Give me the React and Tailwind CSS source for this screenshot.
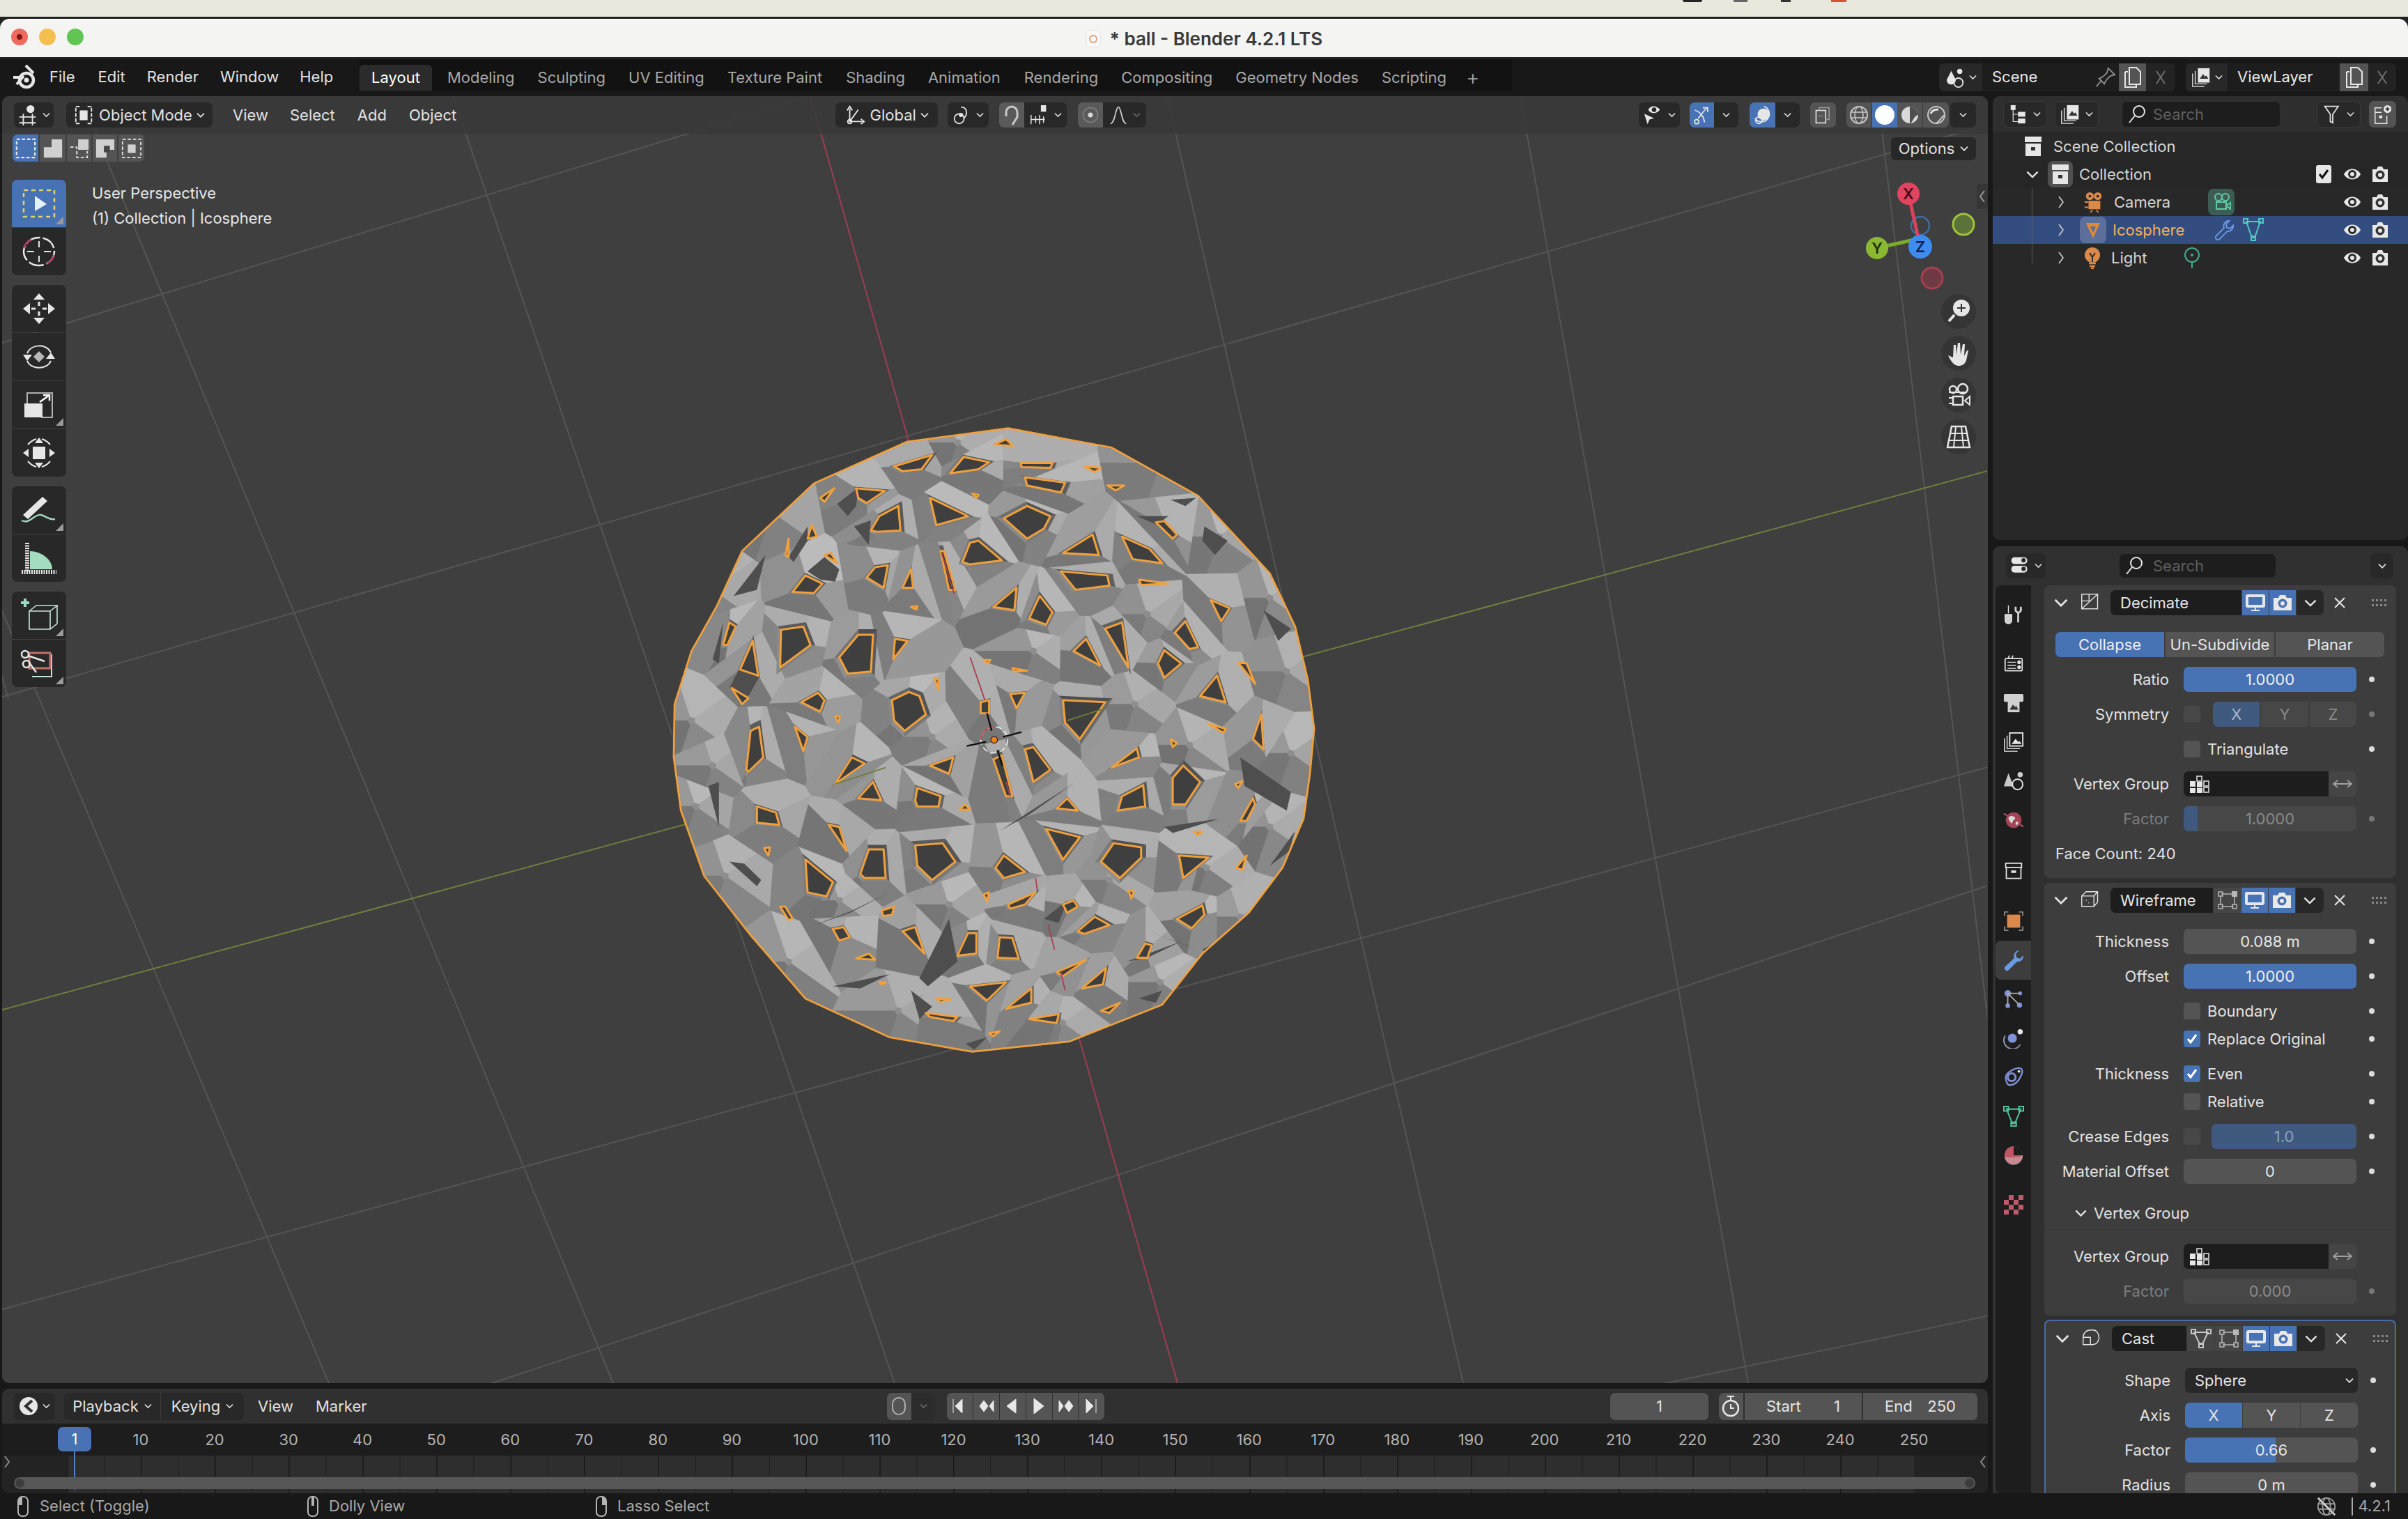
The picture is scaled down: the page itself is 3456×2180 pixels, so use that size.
import React, { useMemo } from 'react';

// ---------- the ball: orange-outlined openings traced from the picture (coords in a 1568 box) ----------
const HOLES = [
  [550,118,640,90,615,125,570,130],[683,135,715,95,775,108,750,125],[787,65,815,52,832,68],[850,110,925,110,920,122,852,120],
  [860,145,955,158,945,182,865,165],[1000,118,1040,122,1025,132],[1055,165,1095,165,1075,177],[460,172,528,178,485,208,465,195],
  [375,195,408,172,385,205],[495,275,515,240,560,215,565,275,510,278],[635,195,725,240,650,262],[810,245,865,215,920,240,905,270,865,295],
  [735,185,750,188,745,195],[1170,255,1190,252,1220,285,1210,295],[345,295,355,262,367,290],[293,335,300,295,300,340],
  [712,352,730,305,750,300,805,348,730,358],[660,325,668,325,695,420,680,420],[950,330,1020,285,1035,335],[1090,290,1155,320,1185,355,1115,345],
  [945,375,1055,385,1060,410,980,420],[1130,395,1200,405,1135,408],[385,335,400,330,415,355],[310,425,340,385,380,405,360,428],
  [485,390,505,365,535,360,525,415],[570,415,590,370,595,415],[590,462,605,460,603,468],[785,462,840,415,835,470],
  [870,490,895,435,925,475,910,505],[1300,445,1345,465,1325,497],[145,555,160,500,175,510,155,555],[280,610,282,518,335,510,352,555],
  [420,585,465,530,500,530,495,620,440,625],[548,590,552,540,582,545],[185,615,215,545,228,630],[975,570,1005,540,1038,605],
  [1050,515,1090,500,1105,610],[1215,525,1240,497,1270,560,1250,565],[1175,600,1190,568,1230,600,1190,635],[1365,598,1385,600,1405,650],
  [1275,680,1315,630,1335,695],[825,675,860,672,840,710],[762,592,778,592,772,600],[830,612,865,618,835,620],[645,635,655,640,655,665],
  [545,690,585,670,610,680,625,725,575,765,550,740],[330,695,370,672,385,690,375,718],[165,660,205,685,190,700],[950,690,1050,695,990,785,955,745],
  [755,695,775,690,775,722,755,722],[410,730,422,730,418,745],[315,755,345,780,335,815],[200,860,210,765,230,755,240,830,205,865],
  [1400,785,1420,725,1425,810],[1295,748,1335,760,1330,770],[1205,785,1220,795,1210,805],[860,810,880,805,920,860,880,890],
  [785,835,805,825,830,925,815,925],[410,895,450,830,480,845],[635,850,690,830,680,870],[1065,855,1125,808,1130,830],
  [1210,880,1235,850,1275,890,1240,945,1210,945],[465,930,500,890,520,935],[600,935,605,905,660,925,655,950,605,950],[705,958,730,958,718,945],
  [935,955,960,930,985,960],[1080,960,1090,925,1140,898,1145,950],[1358,895,1375,888,1365,905],[1370,985,1400,930,1405,945,1385,985],
  [225,950,270,965,278,995,225,990],[395,995,420,1000,438,1060],[910,1005,990,1025,950,1080],[1040,1085,1070,1040,1135,1050,1135,1075,1085,1125],
  [1225,1070,1295,1075,1235,1125],[600,1045,665,1040,695,1085,640,1130,605,1095],[470,1115,490,1055,525,1055,530,1125,480,1125],
  [242,1052,256,1050,252,1070],[340,1080,405,1135,390,1170,345,1160],[790,1100,810,1070,860,1110,810,1125],[1260,1012,1280,1012,1270,1020],
  [1360,1100,1385,1070,1375,1105],[820,1190,885,1160,860,1190,825,1200],[762,1165,775,1160,770,1182],[950,1190,975,1180,985,1195,960,1210],
  [985,1255,1025,1220,1060,1240,1000,1262],[1105,1155,1118,1158,1112,1175],[1220,1225,1280,1192,1285,1215,1255,1248],[520,1205,550,1195,545,1215,525,1218],
  [405,1250,430,1245,445,1270,420,1278],[570,1255,600,1245,622,1310],[700,1315,725,1260,745,1260,745,1310],[795,1320,800,1270,830,1272,845,1322],
  [1125,1320,1145,1285,1160,1290,1150,1320],[935,1355,1005,1325,950,1365],[995,1395,1052,1345,1045,1385],[460,1322,490,1310,505,1325],
  [280,1195,292,1195,310,1225,300,1228],[730,1390,815,1380,770,1425],[815,1445,875,1395,875,1430],[650,1420,685,1422,660,1428],
  [625,1455,700,1465,690,1475,635,1465],[870,1470,940,1458,935,1480],[1040,1450,1085,1430,1060,1455],[775,1505,800,1500,785,1512],[515,1380,530,1380,522,1386],
];

// extra ridge centres so the rim breaks into facets too
const RIM = [
  [700,60],[1180,110],[1320,290],[1440,440],[1480,620],[1490,820],[1440,1000],[1370,1220],[1180,1380],[950,1480],[560,1450],[300,1330],
  [150,1120],[80,950],[70,740],[120,420],[260,230],[1250,800],[1120,700],[880,570],[640,780],[120,850],[1290,1100],[1060,1130],[680,1190],[420,1180],[1150,480],
];

const SHARDS = [
  [300,340,345,265,345,300,312,352],[415,210,465,170,460,215,440,240],[345,375,385,340,420,370,410,400,375,395],[170,435,245,335,225,420],
  [120,590,145,500,135,600],[160,660,190,600,230,635,205,680],[1285,265,1340,300,1310,335,1280,300],[1425,470,1490,515,1460,545],
  [1370,830,1490,915,1480,960,1380,900],[1150,1255,1280,1305,1230,1285],[350,1245,445,1210,540,1160,450,1205],[630,1390,700,1330,680,1225,610,1370],
  [800,1010,980,890,870,970],[1190,1000,1320,980,1210,1015],[110,900,135,890,135,1000],[1280,1300,1340,1270,1300,1315],[720,1530,770,1515,740,1545],
  [1130,1420,1185,1400,1170,1430],[1205,200,1265,195,1240,215],[455,265,495,250,490,310],[1125,240,1200,240,1170,260],[160,1085,195,1090,235,1130,225,1145],
  [940,1235,960,1180,905,1225],[1440,1095,1500,1010,1485,1060],[1100,1330,1230,1280,1150,1320],[405,1390,540,1360,470,1395],[590,1400,640,1440,610,1470],
];

const OUTLINE = '820,25 1065,72 1270,190 1440,380 1500,510 1530,640 1545,760 1535,870 1520,980 1470,1100 1390,1210 1280,1310 1185,1435 965,1525 735,1550 540,1515 340,1420 210,1265 100,1120 45,960 28,830 30,700 70,570 130,460 190,325 360,160 580,58';

const toPts = (a) => { const r = []; for (let i = 0; i < a.length; i += 2) r.push([a[i], a[i + 1]]); return r; };
const centre = (p) => [p.reduce((s, q) => s + q[0], 0) / p.length, p.reduce((s, q) => s + q[1], 0) / p.length];
const ptStr = (p) => p.map((q) => `${q[0].toFixed(1)},${q[1].toFixed(1)}`).join(' ');
const area = (p) => Math.abs(p.reduce((s, q, i) => { const n = p[(i + 1) % p.length]; return s + q[0] * n[1] - n[0] * q[1]; }, 0)) / 2;

function clipCell(poly, a, b) {
  const f = (p) => (p[0] - a[0]) ** 2 + (p[1] - a[1]) ** 2 - (p[0] - b[0]) ** 2 - (p[1] - b[1]) ** 2;
  const out = [];
  poly.forEach((p, i) => {
    const q = poly[(i + 1) % poly.length];
    const fp = f(p), fq = f(q);
    if (fp <= 0) out.push(p);
    if (fp * fq < 0) { const t = fp / (fp - fq); out.push([p[0] + (q[0] - p[0]) * t, p[1] + (q[1] - p[1]) * t]); }
  });
  return out;
}

function rayHit(c, ang, cell) {
  const dx = Math.cos(ang), dy = Math.sin(ang);
  let best = null, bestT = Infinity;
  cell.forEach((p, i) => {
    const q = cell[(i + 1) % cell.length];
    const ex = q[0] - p[0], ey = q[1] - p[1];
    const d = dx * ey - dy * ex;
    if (Math.abs(d) < 1e-9) return;
    const t = ((p[0] - c[0]) * ey - (p[1] - c[1]) * ex) / d;
    const u = ((p[0] - c[0]) * dy - (p[1] - c[1]) * dx) / d;
    if (t > 0 && u >= -1e-6 && u <= 1 + 1e-6 && t < bestT) { bestT = t; best = [c[0] + dx * t, c[1] + dy * t]; }
  });
  return best || c;
}

function buildBall() {
  const holes = HOLES.map((a) => {
    const pts = toPts(a);
    const c = centre(pts);
    return { c, pts: pts.sort((p, q) => Math.atan2(p[1] - c[1], p[0] - c[0]) - Math.atan2(q[1] - c[1], q[0] - c[0])), real: true };
  });
  const seeds = holes.filter((h) => area(h.pts) > 500);
  RIM.forEach(([x, y]) => {
    const pts = [0, 1, 2, 3, 4].map((k) => [x + 10 * Math.cos(k * 1.257 - 3.1416 + 0.3 * (x % 5)), y + 10 * Math.sin(k * 1.257 - 3.1416 + 0.3 * (x % 5))]);
    seeds.push({ c: [x, y], pts, real: false });
  });
  const faces = [];
  const walls = [];
  seeds.forEach((h, si) => {
    let cell = [[-60, -60], [1630, -60], [1630, 1630], [-60, 1630]];
    seeds.forEach((o, oi) => { if (oi !== si) cell = clipCell(cell, h.c, o.c); });
    h.pts.forEach((a, i) => {
      const b = h.pts[(i + 1) % h.pts.length];
      const a1 = Math.atan2(a[1] - h.c[1], a[0] - h.c[0]);
      let a2 = Math.atan2(b[1] - h.c[1], b[0] - h.c[0]);
      if (a2 <= a1) a2 += Math.PI * 2;
      const between = cell
        .map((p) => { let t = Math.atan2(p[1] - h.c[1], p[0] - h.c[0]); while (t < a1) t += Math.PI * 2; return { p, t }; })
        .filter((o) => o.t < a2)
        .sort((m, n) => m.t - n.t)
        .map((o) => o.p);
      const mid = (a1 + a2) / 2;
      const lit = Math.cos(mid) * 0.6 - Math.sin(mid) * 0.8;
      const jitter = ((si * 7 + i * 13) % 11) - 5;
      const g = Math.round(150 + 32 * lit + jitter);
      faces.push({ pts: [a, rayHit(h.c, a1, cell), ...between, rayHit(h.c, a2, cell), b], g });
      if (h.real) {
        const grow = (p) => [h.c[0] + (p[0] - h.c[0]) * 1.28, h.c[1] + (p[1] - h.c[1]) * 1.28];
        const w = Math.round(112 - 30 * lit + jitter);
        walls.push({ pts: [a, grow(a), grow(b), b], g: w });
      }
    });
  });
  return { holes, faces, walls };
}

function Ball() {
  const { holes, faces, walls } = useMemo(buildBall, []);
  return (
    <g transform="translate(950 600) scale(0.6059 0.5867)">
      <clipPath id="ball-clip"><polygon points={OUTLINE} /></clipPath>
      <polygon points={OUTLINE} fill="#8e8e8e" />
      <g clipPath="url(#ball-clip)">
        {faces.map((f, i) => <polygon key={i} points={ptStr(f.pts)} fill={`rgb(${f.g},${f.g},${f.g})`} stroke={`rgb(${f.g},${f.g},${f.g})`} strokeWidth="0.8" />)}
        {walls.map((f, i) => <polygon key={i} points={ptStr(f.pts)} fill={`rgb(${f.g},${f.g},${f.g})`} />)}
        {SHARDS.map((s, i) => <polygon key={i} points={ptStr(toPts(s))} fill="#4e4e4e" />)}
      </g>
      {holes.map((h, i) => <polygon key={i} points={ptStr(h.pts)} fill="#3f3f3f" stroke="#f0a03c" strokeWidth="5" strokeLinejoin="round" />)}
      <g fill="none" strokeWidth="3">
        <path d="M662 328L692 430M730 585L765 690M885 1125L890 1160M915 1240L930 1300M945 1355L955 1400M815 890L825 925" stroke="#a8404f" />
        <path d="M960 740L1050 710M410 895L530 855" stroke="#6d7d3c" />
      </g>
      <polygon points={OUTLINE} fill="none" stroke="#f0a03c" strokeWidth="4.5" />
      <g fill="none">
        <circle cx="787" cy="787" r="32" stroke="#e8e8e8" strokeWidth="3" strokeDasharray="14 8" />
        <path d="M787 787m-32 0a32 32 0 0 1 32-32" stroke="#c05050" strokeWidth="3" />
        <path d="M722 802L768 792M808 780L852 768M770 722L781 765M795 812L806 850" stroke="#101010" strokeWidth="4" />
        <circle cx="787" cy="787" r="8" fill="#f0801c" stroke="#222" strokeWidth="2" />
      </g>
    </g>
  );
}

// ---------- viewport floor grid ----------
const GRID = [
  [0,493,1177,134],[0,1001,2856,178],[0,1880,2856,1100],[0,2220,2856,1270],[1600,2150,2856,1888],
  [115,138,880,1985],[650,138,1284,1985],[1675,138,2100,1985],[2182,138,2509,1985],[2695,138,2915,1985],[0,870,472,1985],[0,960,12,1003],
];

// ---------- little icon helpers ----------
const Ico = ({ w = 32, h = 32, vb = '0 0 32 32', children, className = '' }) => (
  <svg width={w} height={h} viewBox={vb} fill="none" stroke="#e6e6e6" strokeWidth="2" className={`shrink-0 ${className}`}>{children}</svg>
);
const Chev = ({ dim, size = 14 }) => (
  <svg width={size} height={size * 0.7} viewBox="0 0 14 10" fill="none" stroke={dim ? '#6a6a6a' : '#e0e0e0'} strokeWidth="2" className="shrink-0"><path d="M1 2l6 6 6-6" /></svg>
);
const GlassIcon = () => (
  <Ico w={26} h={28} vb="0 0 26 28" ><circle cx="16" cy="10" r="8" /><path d="M10 16L2 26" /></Ico>
);
const Eye = () => (
  <Ico w={26} h={24} vb="0 0 26 24"><path d="M1 12C6 2 20 2 25 12C20 22 6 22 1 12Z" fill="#e8e8e8" stroke="none" /><circle cx="13" cy="12" r="6" fill="#2a2a2a" stroke="none" /><circle cx="13" cy="12" r="3" fill="#e8e8e8" stroke="none" /></Ico>
);
const CamRender = ({ fill = '#e8e8e8', lens = '#2a2a2a' }) => (
  <Ico w={26} h={26} vb="0 0 26 26"><path d="M2 6h6l2-4h6l2 4h6v18H2Z" fill={fill} stroke="none" /><circle cx="13" cy="14" r="6.5" fill={lens} stroke="none" /><circle cx="13" cy="14" r="3" fill={fill} stroke="none" /></Ico>
);
const Monitor = () => (
  <Ico w={30} h={26} vb="0 0 30 26"><rect x="2" y="2" width="26" height="17" rx="2" fill="#dfe6f2" stroke="#e8e8e8" /><rect x="5" y="5" width="20" height="11" fill="#4772b3" stroke="none" /><path d="M9 24h12M15 19v5" /></Ico>
);
const CamBlue = () => (
  <Ico w={30} h={26} vb="0 0 30 26"><path d="M2 6h7l2-4h8l2 4h7v18H2Z" fill="#e8e8e8" stroke="none" /><circle cx="15" cy="14" r="6.5" fill="#4772b3" stroke="none" /><circle cx="15" cy="14" r="3" fill="#e8e8e8" stroke="none" /></Ico>
);
const Cage = () => (
  <Ico w={30} h={28} vb="0 0 30 28" className="opacity-70"><path d="M6 5H24M6 23H24M5 7V21M25 7V21" strokeWidth="1.5" /><rect x="2" y="2" width="6" height="6" strokeWidth="1.5" /><rect x="21" y="1" width="8" height="8" fill="#e8e8e8" stroke="none" /><rect x="2" y="20" width="6" height="6" strokeWidth="1.5" /><rect x="22" y="20" width="6" height="6" strokeWidth="1.5" /></Ico>
);
const TriMesh = ({ c = '#e6e6e6', op = 'opacity-80' }) => (
  <Ico w={30} h={28} vb="0 0 30 28" className={op}><path d="M5 5H25L17 22H13Z" stroke={c} /><rect x="1" y="1" width="6" height="6" stroke={c} /><rect x="23" y="1" width="6" height="6" stroke={c} /><rect x="12" y="21" width="6" height="6" stroke={c} /></Ico>
);
const GroupIcon = () => (
  <Ico w={32} h={28} vb="0 0 32 28" className="ml-[8px]" >
    <rect x="1" y="10" width="8" height="8" fill="#e6e6e6" stroke="none" /><rect x="11" y="3" width="7" height="7" strokeWidth="1.5" /><rect x="11" y="11" width="8" height="8" fill="#e6e6e6" stroke="none" /><rect x="21" y="10" width="7" height="7" strokeWidth="1.5" /><rect x="1" y="20" width="8" height="7" fill="#e6e6e6" stroke="none" /><rect x="11" y="20" width="8" height="7" fill="#e6e6e6" stroke="none" /><rect x="21" y="19" width="7" height="7" strokeWidth="1.5" />
  </Ico>
);
const CornerMark = () => (
  <span className="absolute bottom-[4px] right-[4px] w-0 h-0 border-l-[11px] border-l-transparent border-b-[11px] border-b-[#9a9a9a]" />
);
const Mouse = ({ part }) => (
  <svg width="18" height="32" viewBox="0 0 18 32" fill="none" stroke="#b4b4b4" strokeWidth="2" className="shrink-0">
    <rect x="2" y="2" width="14" height="28" rx="6" />
    {part === 'left' && <path d="M3 3h5v11H3Z" fill="#b4b4b4" stroke="none" />}
    {part === 'mid' && <rect x="7" y="3" width="4" height="12" fill="#b4b4b4" stroke="none" />}
    {part === 'right' && <path d="M10 3h5v11h-5Z" fill="#b4b4b4" stroke="none" />}
  </svg>
);

// ---------- header pieces ----------
const DarkBtn = ({ className = '', children }) => (
  <div className={`h-[36px] bg-[#282828] rounded-[7px] flex items-center justify-center gap-[6px] shrink-0 ${className}`}>{children}</div>
);
const Menu = ({ children, className = '' }) => <span className={`text-[22px] text-[#e2e2e2] ${className}`}>{children}</span>;

function ViewportHeader() {
  return (
    <div className="relative h-[54px] flex items-center pl-[17px] pr-[17px] bg-[#383838]/85">
      <DarkBtn className="w-[57px]">
        <Ico w={30} h={32}><circle cx="20" cy="7" r="6" fill="#e6e6e6" stroke="none" /><path d="M3 19H28M3 28H28M9 14V32M23 14V32" /></Ico><Chev size={11} />
      </DarkBtn>
      <DarkBtn className="w-[210px] ml-[18px]">
        <Ico w={30} h={34}><path d="M9 3H3V29H9M21 3H27V29H21" strokeDasharray="6 2" /><rect x="9" y="9" width="12" height="15" fill="#e6e6e6" stroke="none" /></Ico>
        <span className="text-[22px] text-[#e2e2e2]">Object Mode</span><Chev size={12} />
      </DarkBtn>
      <Menu className="ml-[29px]">View</Menu>
      <Menu className="ml-[31px]">Select</Menu>
      <Menu className="ml-[32px]">Add</Menu>
      <Menu className="ml-[32px]">Object</Menu>

      <DarkBtn className="w-[147px] ml-[544px]">
        <Ico w={30} h={32}><path d="M7 6V26H27M7 26L20 8" /><path d="M3 9L7 3l4 6M24 22l5 4-5 4" /><circle cx="7" cy="26" r="3" /></Ico>
        <span className="text-[22px] text-[#e2e2e2]">Global</span><Chev size={12} />
      </DarkBtn>
      <DarkBtn className="w-[59px] ml-[14px]">
        <Ico w={28} h={32}><circle cx="11" cy="22" r="8" /><path d="M14 3C24 3 26 15 18 22" /><circle cx="14" cy="16" r="2.5" fill="#e6e6e6" /></Ico><Chev size={11} />
      </DarkBtn>
      <div className="ml-[15px] w-[36px] h-[36px] bg-[#5a5a5a] rounded-l-[7px] flex items-center justify-center">
        <Ico w={26} h={32} vb="0 0 26 32"><path d="M5 18V12a8 8 0 0 1 16 0v7L14 30" stroke="#c8c8c8" strokeWidth="3" /></Ico>
      </div>
      <DarkBtn className="w-[61px] rounded-l-none">
        <Ico w={30} h={32}><rect x="18" y="1" width="8" height="10" fill="#e6e6e6" stroke="none" /><path d="M3 16V30M10 18V28M16 16V30M22 18V28M3 23H24" strokeWidth="1.6" /></Ico><Chev size={11} />
      </DarkBtn>
      <div className="ml-[16px] w-[36px] h-[36px] bg-[#5a5a5a] rounded-l-[7px] flex items-center justify-center">
        <Ico w={28} h={28}><circle cx="16" cy="16" r="12" stroke="#7c7c7c" /><circle cx="16" cy="16" r="4" fill="#d8d8d8" stroke="none" /></Ico>
      </div>
      <DarkBtn className="w-[62px] rounded-l-none">
        <Ico w={28} h={32}><path d="M2 30C10 30 10 3 15 3C20 3 20 30 28 30" stroke="#cfcfcf" /></Ico><Chev dim size={11} />
      </DarkBtn>

      <div className="ml-auto flex items-center">
        <DarkBtn className="w-[59px]">
          <Ico w={30} h={32}><path d="M2 14L7 30l3-7 7-2Z" fill="#e6e6e6" stroke="none" /><path d="M8 8C12 1 20 1 26 8C20 15 12 15 8 8Z" fill="#e6e6e6" stroke="none" /><circle cx="17" cy="8" r="3.5" fill="#282828" stroke="none" /></Ico><Chev size={11} />
        </DarkBtn>
        <div className="ml-[14px] w-[35px] h-[36px] bg-[#4772b3] rounded-l-[7px] flex items-center justify-center">
          <Ico w={28} h={32}><circle cx="7" cy="27" r="3.5" /><path d="M4 8C14 12 18 18 20 28M9 22C14 16 18 10 24 4" /><path d="M17 4H25V11" /></Ico>
        </div>
        <DarkBtn className="w-[35px] rounded-l-none"><Chev size={11} /></DarkBtn>
        <div className="ml-[16px] w-[37px] h-[36px] bg-[#4772b3] rounded-l-[7px] flex items-center justify-center">
          <Ico w={30} h={34}><path d="M18 3a12 12 0 1 1-14 18" /><circle cx="17" cy="15" r="9" fill="#e6e6e6" stroke="none" /><circle cx="10" cy="24" r="5" /></Ico>
        </div>
        <DarkBtn className="w-[35px] rounded-l-none"><Chev size={11} /></DarkBtn>
        <div className="ml-[15px] w-[37px] h-[36px] bg-[#545454] rounded-[7px] flex items-center justify-center">
          <Ico w={26} h={32}><rect x="3" y="8" width="17" height="22" /><path d="M9 8V3H26V24H20" stroke="#9a9a9a" /><path d="M9 18h1M13 18h1" /></Ico>
        </div>
        <div className="ml-[15px] flex h-[36px] rounded-[7px] overflow-hidden">
          <div className="w-[37px] bg-[#545454] flex items-center justify-center border-r border-[#3a3a3a]">
            <Ico w={28} h={28} vb="0 0 28 28"><circle cx="14" cy="14" r="12" stroke="#c8c8c8" /><ellipse cx="14" cy="14" rx="6" ry="12" stroke="#c8c8c8" strokeWidth="1.5" /><path d="M2 10H26M2 18H26" stroke="#c8c8c8" strokeWidth="1.5" /></Ico>
          </div>
          <div className="w-[36px] bg-[#4772b3] flex items-center justify-center"><div className="w-[28px] h-[28px] rounded-full bg-white" /></div>
          <div className="w-[37px] bg-[#545454] flex items-center justify-center border-r border-[#3a3a3a]">
            <Ico w={28} h={28} vb="0 0 28 28"><circle cx="14" cy="14" r="12" fill="#d8d8d8" stroke="none" /><path d="M14 2A12 12 0 0 1 26 14C20 14 18 26 14 26Z" fill="#505050" stroke="none" /></Ico>
          </div>
          <div className="w-[37px] bg-[#545454] flex items-center justify-center">
            <Ico w={28} h={28} vb="0 0 28 28"><circle cx="14" cy="14" r="12" stroke="#c8c8c8" /><path d="M6 12C8 7 13 6 17 6" stroke="#e6e6e6" strokeWidth="3" /><path d="M26 14C22 16 20 22 14 26" stroke="#c8c8c8" /></Ico>
          </div>
        </div>
        <DarkBtn className="w-[37px] ml-[2px]"><Chev size={11} /></DarkBtn>
      </div>
    </div>
  );
}

function SelectModes() {
  const dash = { strokeDasharray: '5 3' };
  return (
    <div className="absolute left-[15px] top-[55px] flex h-[39px] rounded-[7px] overflow-hidden gap-[2px]">
      <div className="w-[37px] bg-[#4772b3] flex items-center justify-center"><Ico w={30} h={32}><rect x="2" y="2" width="28" height="28" strokeWidth="2.5" {...dash} /></Ico></div>
      <div className="w-[37px] bg-[#545454] flex items-center justify-center"><Ico w={30} h={32}><path d="M14 2H30V30H2V14H14Z" fill="#d0d0d0" stroke="none" /></Ico></div>
      <div className="w-[35px] bg-[#545454] flex items-center justify-center"><Ico w={30} h={32}><path d="M14 2H30V18H14Z" fill="#d0d0d0" stroke="none" /><path d="M2 14H12V30H28V20" {...dash} /></Ico></div>
      <div className="w-[35px] bg-[#545454] flex items-center justify-center"><Ico w={30} h={32}><path d="M2 2H30V18H18V30H2Z" fill="#d0d0d0" stroke="none" /><rect x="14" y="12" width="9" height="10" fill="#454545" stroke="none" /></Ico></div>
      <div className="w-[37px] bg-[#545454] flex items-center justify-center"><Ico w={30} h={32}><rect x="2" y="2" width="28" height="28" {...dash} /><rect x="10" y="10" width="12" height="13" fill="#d0d0d0" stroke="none" /></Ico></div>
    </div>
  );
}

function Tool({ active, mark, children, className = '' }) {
  return (
    <div className={`relative w-[78px] h-[68px] flex items-center justify-center ${active ? 'bg-[#4772b3]' : 'bg-[#282828]'} ${className}`}>
      {children}
      {mark && <CornerMark />}
    </div>
  );
}

function Toolbar() {
  return (
    <div className="absolute left-[14px] top-[120px] flex flex-col w-[78px]">
      <div className="flex flex-col gap-[1px] rounded-[8px] overflow-hidden">
        <Tool active mark>
          <Ico w={50} h={46} vb="0 0 50 46"><rect x="3" y="4" width="44" height="38" stroke="#e4d36a" strokeWidth="2.5" strokeDasharray="6 5" /><path d="M19 12L36 24L19 34Z" fill="#e8eef8" stroke="none" /></Ico>
        </Tool>
        <Tool>
          <Ico w={50} h={46} vb="0 0 50 46"><ellipse cx="25" cy="23" rx="22" ry="20" stroke="#e8e8e8" strokeWidth="2.5" strokeDasharray="22 4" /><path d="M3 18A22 20 0 0 1 14 6M47 28A22 20 0 0 1 36 40" stroke="#b04060" strokeWidth="2.5" /><path d="M25 8V17M25 29V38M8 23H18M32 23H42" /></Ico>
        </Tool>
      </div>
      <div className="flex flex-col gap-[1px] rounded-[8px] overflow-hidden mt-[14px]">
        <Tool>
          <Ico w={50} h={48} vb="0 0 50 48"><path d="M25 2l8 9H17ZM25 46l8-9H17ZM2 24l10-8v16ZM48 24l-10-8v16Z" fill="#e6e6e6" stroke="none" /><path d="M25 14v6M25 28v6M14 24h6M30 24h6" strokeWidth="3" /></Ico>
        </Tool>
        <Tool>
          <Ico w={50} h={44} vb="0 0 50 44"><path d="M25 14l8 8-8 8-8-8Z" fill="#b8b8b8" stroke="none" /><path d="M8 17C14 3 36 3 42 16M42 28C36 41 14 41 8 28" /><path d="M2 19h13l-7 9ZM48 25H35l7-9Z" fill="#e6e6e6" stroke="none" /></Ico>
        </Tool>
        <Tool mark>
          <Ico w={50} h={44} vb="0 0 50 44"><path d="M8 20V5H44V40H28" stroke="#b0b0b0" /><rect x="4" y="20" width="26" height="20" fill="#e6e6e6" stroke="none" /><path d="M26 18L40 8M31 8H40V16" stroke="#ffffff" strokeWidth="2.5" /></Ico>
        </Tool>
        <Tool>
          <Ico w={50} h={48} vb="0 0 50 48"><rect x="16" y="15" width="18" height="18" fill="#e6e6e6" stroke="none" /><path d="M25 2l6 8H19ZM25 46l6-8H19ZM2 24l8-6v12ZM48 24l-8-6v12Z" fill="#e6e6e6" stroke="none" /><path d="M9 12C14 6 18 5 21 4M41 12C36 6 32 5 29 4M9 36C14 42 18 43 21 44M41 36C36 42 32 43 29 44" /></Ico>
        </Tool>
      </div>
      <div className="flex flex-col gap-[1px] rounded-[8px] overflow-hidden mt-[14px]">
        <Tool mark>
          <Ico w={54} h={46} vb="0 0 54 46"><path d="M4 30L32 4l7 6L11 36Z" fill="#e6e6e6" stroke="none" /><path d="M2 38C14 44 20 28 30 30C38 32 42 38 50 36" stroke="#9fd8c0" strokeWidth="2.5" /></Ico>
        </Tool>
        <Tool>
          <Ico w={54} h={48} vb="0 0 54 48"><path d="M14 40V14C30 14 46 26 46 40Z" fill="#a4dcc0" stroke="none" /><path d="M2 44H52M10 2V44" stroke="#e6e6e6" strokeWidth="6" strokeDasharray="2 1.5" /></Ico>
        </Tool>
      </div>
      <div className="flex flex-col gap-[1px] rounded-[8px] overflow-hidden mt-[14px]">
        <Tool mark>
          <Ico w={56} h={48} vb="0 0 56 48"><path d="M2 6h12M8 0v12" stroke="#9fd8c0" strokeWidth="4" /><path d="M14 18H44V44H14ZM14 18L24 10H54L44 18M54 10V36L44 44" stroke="#c8e4d8" strokeWidth="1.6" /></Ico>
        </Tool>
        <Tool mark>
          <Ico w={56} h={50} vb="0 0 56 50"><path d="M18 44H46V12" stroke="#c8e4d8" /><path d="M14 34V10H44V32H14" stroke="#c0706a" strokeWidth="3" /><circle cx="8" cy="12" r="5" stroke="#e6e6e6" strokeWidth="2.5" /><circle cx="10" cy="26" r="5" stroke="#e6e6e6" strokeWidth="2.5" /><path d="M12 14L36 22M14 24L24 38" stroke="#e6e6e6" strokeWidth="2.5" /></Ico>
        </Tool>
      </div>
    </div>
  );
}

function Gizmo() {
  const Round = ({ children }) => <div className="w-[50px] h-[50px] rounded-full bg-[#353535] flex items-center justify-center mb-[10px]">{children}</div>;
  return (
    <>
      <svg className="absolute left-[2660px] top-[115px]" width="180" height="165" viewBox="2660 253 180 165">
        <circle cx="2753" cy="324" r="13" fill="none" stroke="#3f6ea3" strokeWidth="2.5" />
        <line x1="2736" y1="278" x2="2752" y2="350" stroke="#d8435c" strokeWidth="5" />
        <line x1="2691" y1="356" x2="2753" y2="342" stroke="#7aae2a" strokeWidth="5" />
        <circle cx="2815" cy="322" r="15" fill="#5d7238" stroke="#9dc33a" strokeWidth="3" />
        <circle cx="2770" cy="399" r="15" fill="#6e3a44" stroke="#a83f50" strokeWidth="3" />
        <circle cx="2736" cy="278" r="16" fill="#e2435f" />
        <circle cx="2691" cy="356" r="16" fill="#8ab832" />
        <circle cx="2753" cy="354" r="17" fill="#3f8cf0" />
        <text x="2736" y="286" textAnchor="middle" fontSize="22" fontWeight="600" fill="#4a0a18">X</text>
        <text x="2691" y="364" textAnchor="middle" fontSize="22" fontWeight="600" fill="#1f3206">Y</text>
        <text x="2753" y="362" textAnchor="middle" fontSize="22" fontWeight="600" fill="#0a2254">Z</text>
      </svg>
      <div className="absolute left-[2783px] top-[284px] flex flex-col">
        <Round><Ico w={34} h={36} vb="0 0 34 36"><circle cx="21" cy="13" r="12" fill="#e6e6e6" stroke="none" /><path d="M15 13h12M21 7v12" stroke="#333" /><path d="M11 23L3 32" strokeWidth="4" /></Ico></Round>
        <Round><Ico w={34} h={36} vb="0 0 34 36"><path d="M2 21l7 3 1-18h3l1 14 2-17h3l1 17 3-15h3l-1 17 4-8h2l-3 14c-2 6-6 8-11 8C11 36 6 30 2 21Z" fill="#e6e6e6" stroke="none" /></Ico></Round>
        <Round><Ico w={36} h={36} vb="0 0 36 36"><circle cx="10" cy="10" r="5" strokeWidth="2.5" /><circle cx="24" cy="9" r="7" strokeWidth="2.5" /><path d="M4 14H30" /><rect x="10" y="20" width="14" height="12" strokeWidth="2.5" /><path d="M4 22H10M4 30H10M34 20L27 26L34 32Z" /></Ico></Round>
        <Round><Ico w={36} h={34} vb="0 0 36 34"><path d="M8 2H28L34 32H2Z" strokeWidth="2.5" /><path d="M14 2L11 32M22 2L25 32M5 12H31M3 22H33" strokeWidth="2" /></Ico></Round>
      </div>
    </>
  );
}

function Viewport() {
  return (
    <div className="relative h-[1847px] mx-[3px] rounded-[10px] overflow-hidden bg-[#3f3f3f]">
      <svg className="absolute left-0 top-0" width="2849" height="1847" viewBox="3 138 2849 1847">
        <g stroke="#555555" strokeWidth="2">{GRID.map((l, i) => <line key={i} x1={l[0]} y1={l[1]} x2={l[2]} y2={l[3]} />)}</g>
        <line x1="0" y1="1450" x2="2856" y2="675" stroke="#6f7f3e" strokeWidth="2" />
        <line x1="1163" y1="138" x2="1690" y2="1985" stroke="#9a3f52" strokeWidth="2" />
        <Ball />
      </svg>
      <ViewportHeader />
      <SelectModes />
      <div className="absolute left-[129px] top-[121px] text-[22px] leading-[36px] text-[#e8e8e8]">
        <div>User Perspective</div>
        <div>(1) Collection | Icosphere</div>
      </div>
      <div className="absolute right-[17px] top-[59px] w-[122px] h-[33px] bg-[#282828] rounded-[6px] flex items-center justify-center gap-[8px]">
        <span className="text-[22px] text-[#e2e2e2]">Options</span><Chev size={12} />
      </div>
      <div className="absolute right-0 top-[126px] w-[16px] h-[36px] bg-[#363636] flex items-center justify-center">
        <svg width="10" height="20" viewBox="0 0 10 20" fill="none" stroke="#9a9a9a" strokeWidth="2"><path d="M8 2L2 10l6 8" /></svg>
      </div>
      <Toolbar />
      <Gizmo />
    </div>
  );
}

// ---------- timeline ----------
const TICK_COLS = Array.from({ length: 50 }, (_, i) => i);
const LABELS = Array.from({ length: 25 }, (_, i) => (i + 1) * 10);

function Transport() {
  const c = '#e8e8e8';
  const icons = [
    <path d="M3 2v20M16 2v20L6 12Z" />, <path d="M4 12L10 4l6 8-6 8ZM18 12l6-8v16Z" />, <path d="M18 2v20L5 12Z" />,
    <path d="M6 1v22L20 12Z" />, <path d="M4 4v16l6-8ZM12 12l6-8 6 8-6 8Z" />, <path d="M5 2v20l10-10ZM19 2v20" />,
  ];
  return (
    <div className="ml-[16px] flex h-[39px] rounded-[7px] overflow-hidden gap-[1px]">
      {icons.map((d, i) => (
        <div key={i} className="w-[38px] bg-[#545454] flex items-center justify-center">
          <svg width="26" height="26" viewBox="0 0 26 24" fill={c} stroke={c} strokeWidth="1">{d}</svg>
        </div>
      ))}
    </div>
  );
}

function Timeline() {
  return (
    <div className="relative h-[150px] mt-[8px] mx-[3px] rounded-[10px] overflow-hidden bg-[#2a2a2a]">
      <div className="h-[50px] bg-[#303030] flex items-center pl-[17px] pr-[15px]">
        <DarkBtn className="w-[59px] h-[39px]">
          <Ico w={28} h={32} vb="0 0 28 32"><circle cx="14" cy="16" r="13" fill="#e6e6e6" stroke="none" /><path d="M19 8L10 16l9 8" stroke="#303030" strokeWidth="4" /></Ico><Chev size={11} />
        </DarkBtn>
        <div className="ml-[13px] flex h-[39px] bg-[#282828] rounded-[7px]">
          <div className="w-[139px] flex items-center justify-center gap-[8px] border-r border-[#3a3a3a]"><span className="text-[22px] text-[#e2e2e2]">Playback</span><Chev size={11} /></div>
          <div className="w-[119px] flex items-center justify-center gap-[8px]"><span className="text-[22px] text-[#e2e2e2]">Keying</span><Chev size={11} /></div>
        </div>
        <Menu className="ml-[20px]">View</Menu>
        <Menu className="ml-[32px]">Marker</Menu>
        <div className="ml-[746px] flex h-[39px] rounded-[7px] overflow-hidden">
          <div className="w-[37px] bg-[#545454] flex items-center justify-center"><div className="w-[20px] h-[26px] rounded-full border-2 border-[#b0b0b0]" /></div>
          <div className="w-[36px] bg-[#2c2c2c] flex items-center justify-center"><Chev dim size={11} /></div>
        </div>
        <Transport />
        <div className="ml-[726px] w-[145px] h-[39px] rounded-[7px] bg-[#545454] flex items-center justify-center text-[22px] text-[#e6e6e6]">1</div>
        <div className="ml-[15px] flex h-[39px] rounded-[7px] overflow-hidden text-[22px] text-[#e6e6e6]">
          <div className="w-[37px] bg-[#545454] flex items-center justify-center">
            <Ico w={26} h={34} vb="0 0 26 34"><circle cx="13" cy="20" r="11" strokeWidth="2.5" /><path d="M8 3H18M13 3V9M13 14V20H18" /></Ico>
          </div>
          <div className="w-[173px] ml-[2px] bg-[#545454] flex items-center justify-between px-[31px]"><span>Start</span><span>1</span></div>
          <div className="w-[169px] ml-[2px] bg-[#545454] flex items-center justify-between px-[31px]"><span>End</span><span>250</span></div>
        </div>
      </div>
      <div className="h-[46px] bg-[#1d1d1d] flex items-center pl-[146px] text-[22px] text-[#b4b4b4]">
        {LABELS.map((n) => <div key={n} className="w-[106.06px] text-center shrink-0">{n}</div>)}
      </div>
      <div className="h-[54px] flex pl-[93px] bg-[#232323]">
        <div className="flex w-[2651px] bg-[#2e2e2e]">
          {TICK_COLS.map((i) => (
            <div key={i} className={`w-[53.03px] shrink-0 border-l-2 ${i % 2 === 0 ? 'border-[#1e1e1e]' : 'border-[#262626]'}`} />
          ))}
        </div>
      </div>
      <div className="absolute left-[80px] top-[55px] w-[48px] h-[35px] rounded-[7px] bg-[#4772b3] flex items-center justify-center text-[22px] text-white">1</div>
      <div className="absolute left-[103px] top-[90px] w-[2px] h-[55px] bg-[#5680c2]" />
      <div className="absolute left-[17px] top-[127px] w-[2815px] h-[17px] rounded-full bg-[#575757] flex items-center justify-between px-[2px]">
        <div className="w-[13px] h-[13px] rounded-full bg-[#3c3c3c]" /><div className="w-[13px] h-[13px] rounded-full bg-[#3c3c3c]" />
      </div>
      <div className="absolute left-[2px] top-[95px]"><svg width="10" height="20" viewBox="0 0 10 20" fill="none" stroke="#8a8a8a" strokeWidth="2"><path d="M2 2l6 8-6 8" /></svg></div>
      <div className="absolute right-[2px] top-[95px]"><svg width="10" height="20" viewBox="0 0 10 20" fill="none" stroke="#8a8a8a" strokeWidth="2"><path d="M8 2L2 10l6 8" /></svg></div>
    </div>
  );
}

// ---------- outliner ----------
const OIcon = ({ type }) => {
  if (type === 'collection') return <Ico w={26} h={30} vb="0 0 26 30"><rect x="1" y="1" width="24" height="8" fill="#e6e6e6" stroke="none" /><path d="M2 11H24V29H2Z" fill="#e6e6e6" stroke="none" /><rect x="10" y="16" width="6" height="5" fill="#333" stroke="none" /></Ico>;
  if (type === 'camera') return <Ico w={30} h={32}><circle cx="10" cy="7" r="6" fill="#d98a4a" stroke="none" /><circle cx="22" cy="7" r="6" fill="#d98a4a" stroke="none" /><circle cx="10" cy="7" r="2" fill="#2a2a2a" stroke="none" /><circle cx="22" cy="7" r="2" fill="#2a2a2a" stroke="none" /><rect x="8" y="14" width="18" height="13" fill="#d98a4a" stroke="none" /><path d="M2 16H8M2 24H8M14 28L11 32M20 28L23 32" stroke="#d98a4a" /></Ico>;
  if (type === 'mesh') return <Ico w={26} h={28} vb="0 0 26 28"><path d="M3 4H23L13 26Z" fill="#e08a34" stroke="none" /><path d="M9 9H17L13 18Z" fill="#5a6a9a" stroke="none" /></Ico>;
  return <Ico w={26} h={32} vb="0 0 26 32"><circle cx="13" cy="12" r="11" fill="#d98a4a" stroke="none" /><path d="M9 9l4 6 4-6M13 15V22" stroke="#2a2a2a" /><path d="M8 24H18M9 28H17M11 31H15" stroke="#d98a4a" strokeWidth="2.5" /></Ico>;
};
const RowEnd = ({ check }) => (
  <div className="ml-auto flex items-center">
    {check && <div className="w-[22px] h-[26px] rounded-[3px] bg-[#e6e6e6] flex items-center justify-center mr-[17px]"><svg width="16" height="16" viewBox="0 0 16 16" fill="none" stroke="#111" strokeWidth="3"><path d="M2 8l4 5 8-11" /></svg></div>}
    <Eye /><div className="w-[14px]" /><CamRender lens="#333" /><div className="w-[27px]" />
  </div>
);
const ORight = () => <svg width="10" height="20" viewBox="0 0 10 20" fill="none" stroke="#cfcfcf" strokeWidth="1.6" className="shrink-0"><path d="M2 2l6 8-6 8" /></svg>;

function Outliner() {
  return (
    <div className="h-[637px] rounded-[10px] overflow-hidden bg-[#282828] relative">
      <div className="h-[52px] flex items-center pl-[15px] pr-[17px] bg-[#2e2e2e]">
        <DarkBtn className="w-[63px] h-[38px] border border-[#3a3a3a]">
          <Ico w={28} h={32}><rect x="2" y="1" width="8" height="8" fill="#e6e6e6" stroke="none" /><rect x="14" y="12" width="12" height="8" fill="#e6e6e6" stroke="none" /><rect x="14" y="23" width="12" height="8" fill="#e6e6e6" stroke="none" /><path d="M6 9V28H14M6 16H14" strokeWidth="1.4" /></Ico><Chev size={11} />
        </DarkBtn>
        <DarkBtn className="w-[63px] h-[38px] ml-[11px] border border-[#3a3a3a]">
          <Ico w={30} h={32}><rect x="10" y="2" width="18" height="22" fill="#e6e6e6" stroke="none" /><path d="M13 18l5-7 3 4 2-2 3 5Z" fill="#333" stroke="none" /><path d="M6 6V26H24M2 10V30H20" strokeWidth="1.5" /></Ico><Chev size={11} />
        </DarkBtn>
        <div className="ml-[33px] w-[228px] h-[38px] bg-[#1d1d1d] rounded-[7px] flex items-center pl-[8px] gap-[10px] border border-[#333]">
          <GlassIcon /><span className="text-[22px] text-[#5e5e5e]">Search</span>
        </div>
        <DarkBtn className="w-[63px] h-[38px] ml-[52px] border border-[#3a3a3a]">
          <Ico w={28} h={32}><path d="M3 3H25L16 16V30L12 28V16Z" /></Ico><Chev size={11} />
        </DarkBtn>
        <div className="ml-[12px] w-[39px] h-[38px] bg-[#545454] rounded-[7px] flex items-center justify-center">
          <Ico w={30} h={32}><circle cx="23" cy="8" r="6" fill="#e6e6e6" stroke="none" /><path d="M20 8h6M23 5v6" stroke="#333" /><path d="M14 6H4V30H22V18" strokeWidth="1.6" /><path d="M4 13H14" strokeWidth="1.6" /><rect x="10" y="18" width="5" height="4" fill="#e6e6e6" stroke="none" /></Ico>
        </div>
      </div>
      <div className="h-[40px] flex items-center pl-[45px]"><OIcon type="collection" /><span className="ml-[16px] text-[22px] text-[#d6d6d6]">Scene Collection</span></div>
      <div className="h-[40px] flex items-center pl-[48px] bg-[#262626]">
        <Chev size={18} />
        <div className="ml-[13px] w-[36px] h-[38px] rounded-[8px] bg-[#505050] flex items-center justify-center"><OIcon type="collection" /></div>
        <span className="ml-[9px] text-[22px] text-[#d6d6d6]">Collection</span>
        <RowEnd check />
      </div>
      <div className="relative">
        <div className="absolute left-[56px] top-0 w-[1px] h-[108px] bg-[#5a5a5a]" />
        <div className="h-[40px] flex items-center pl-[93px]">
          <ORight />
          <div className="ml-[27px]"><OIcon type="camera" /></div>
          <span className="ml-[14px] text-[22px] text-[#d6d6d6]">Camera</span>
          <div className="ml-[54px] w-[38px] h-[38px] rounded-[8px] bg-[#3c5c55] flex items-center justify-center">
            <Ico w={28} h={26} vb="0 0 28 26"><circle cx="10" cy="6" r="5" stroke="#62c8a4" /><circle cx="20" cy="6" r="5" stroke="#62c8a4" /><rect x="7" y="13" width="14" height="10" stroke="#62c8a4" /><path d="M21 18l6-4v9Z" stroke="#62c8a4" /></Ico>
          </div>
          <RowEnd />
        </div>
        <div className="h-[40px] flex items-center pl-[93px] bg-[#334d80]">
          <ORight />
          <div className="ml-[22px] w-[38px] h-[38px] rounded-[8px] bg-[#5b6f9a] flex items-center justify-center"><OIcon type="mesh" /></div>
          <span className="ml-[9px] text-[22px] text-[#f0b060]">Icosphere</span>
          <div className="ml-[42px]"><Ico w={30} h={32}><path d="M24 2a8 8 0 0 0-8 11L4 25a3.5 3.5 0 0 0 5 5l12-12a8 8 0 0 0 9-9l-5 5-5-2-1-5 5-5Z" stroke="#6a9ae6" /></Ico></div>
          <div className="ml-[12px]"><Ico w={30} h={34} vb="0 0 30 34"><path d="M5 5H25L17 28H13Z" stroke="#50c8c0" /><rect x="1" y="1" width="6" height="6" stroke="#50c8c0" /><rect x="23" y="1" width="6" height="6" stroke="#50c8c0" /><rect x="12" y="26" width="6" height="6" stroke="#50c8c0" /></Ico></div>
          <RowEnd />
        </div>
        <div className="h-[40px] flex items-center pl-[93px]">
          <ORight />
          <div className="ml-[27px]"><OIcon type="light" /></div>
          <span className="ml-[14px] text-[22px] text-[#d6d6d6]">Light</span>
          <div className="ml-[52px]"><Ico w={26} h={32} vb="0 0 26 32"><circle cx="13" cy="12" r="10" stroke="#3fae8c" /><circle cx="13" cy="12" r="2" fill="#3fae8c" stroke="none" /><path d="M13 22V31" stroke="#3fae8c" /></Ico></div>
          <RowEnd />
        </div>
      </div>
    </div>
  );
}

// ---------- properties ----------
const Dot = ({ dim }) => <div className={`ml-[18px] w-[8px] h-[8px] rounded-full shrink-0 ${dim ? 'bg-[#777777]' : 'bg-[#dcdcdc]'}`} />;
const Row = ({ label, dim, noDot, dotDim, cls = 'h-[50px]', children }) => (
  <div className={`flex items-center ${cls}`}>
    <div className={`w-[179px] text-right text-[22px] shrink-0 ${dim ? 'text-[#7c7c7c]' : 'text-[#e2e2e2]'}`}>{label}</div>
    <div className="ml-[21px] w-[248px] shrink-0">{children}</div>
    {noDot ? null : <Dot dim={dotDim} />}
  </div>
);
const Num = ({ v, blue, dim, cls = '' }) => (
  <div className={`h-[36px] rounded-[7px] flex items-center justify-center text-[22px] ${blue ? 'bg-[#4772b3] text-[#f0f0f0]' : dim ? 'bg-[#474747] text-[#8a8a8a]' : 'bg-[#545454] text-[#e6e6e6]'} ${cls}`}>{v}</div>
);
const Check = ({ on, dim, label }) => (
  <div className="flex items-center">
    <div className={`w-[24px] h-[24px] rounded-[4px] flex items-center justify-center shrink-0 ${on ? 'bg-[#4772b3]' : dim ? 'bg-[#474747]' : 'bg-[#545454]'}`}>
      {on && <svg width="18" height="18" viewBox="0 0 18 18" fill="none" stroke="#fff" strokeWidth="3"><path d="M3 9l4 5 8-11" /></svg>}
    </div>
    {label && <span className="ml-[10px] text-[22px] text-[#e2e2e2]">{label}</span>}
  </div>
);
const VGroupField = () => (
  <div className="flex h-[36px]">
    <div className="w-[208px] bg-[#1d1d1d] rounded-l-[7px] flex items-center"><GroupIcon /></div>
    <div className="w-[40px] bg-[#454545] rounded-r-[7px] flex items-center justify-center">
      <svg width="30" height="14" viewBox="0 0 30 14" fill="none" stroke="#a0a0a0" strokeWidth="1.8"><path d="M2 7H28M8 2L2 7l6 5M22 2l6 5-6 5" /></svg>
    </div>
  </div>
);
const ModHeader = ({ name, nameW, icon, extra }) => (
  <div className="h-[50px] flex items-center pl-[14px]">
    <Chev size={20} />
    <div className="ml-[12px] w-[40px] flex justify-center">{icon}</div>
    <div className="ml-[9px] flex h-[36px] w-[306px] rounded-[7px] overflow-hidden">
      <div className={`bg-[#1d1d1d] flex items-center pl-[14px] text-[22px] text-[#e6e6e6] ${nameW}`}>{name}</div>
      {extra}
      <div className="w-[38px] ml-[1px] bg-[#4772b3] flex items-center justify-center"><Monitor /></div>
      <div className="w-[38px] ml-[1px] bg-[#4772b3] flex items-center justify-center"><CamBlue /></div>
      <div className="flex-1 ml-[1px] bg-[#282828] flex items-center justify-center"><Chev size={18} /></div>
    </div>
    <svg width="18" height="18" viewBox="0 0 18 18" fill="none" stroke="#e6e6e6" strokeWidth="2" className="ml-[14px]"><path d="M2 2l14 14M16 2L2 16" /></svg>
    <svg width="24" height="12" viewBox="0 0 24 12" fill="#8a8a8a" className="ml-[37px]">
      {[0, 6, 12, 18].map((x) => <React.Fragment key={x}><rect x={x} y="1" width="3" height="3" /><rect x={x} y="8" width="3" height="3" /></React.Fragment>)}
    </svg>
  </div>
);
const GreyBtn = ({ children, w = 'w-[39px]' }) => <div className={`${w} ml-[1px] bg-[#454545] flex items-center justify-center`}>{children}</div>;

function TabIcon({ active, children }) {
  return <div className={`h-[56px] flex items-center justify-center ${active ? 'bg-[#3d3d3d] rounded-l-[8px]' : ''}`}>{children}</div>;
}

function PropTabs() {
  return (
    <div className="w-[51px] ml-[4px] mt-[4px] bg-[#1d1d1d] rounded-l-[8px] pt-[14px] shrink-0">
      <TabIcon><Ico w={30} h={30}><path d="M8 2v12M3 16h10v9a5 5 0 0 1-10 0Z" fill="#d0d0d0" strokeWidth="1.5" /><path d="M19 4v6l3 3h2l3-3V4M23 13v15" strokeWidth="3" stroke="#d0d0d0" /></Ico></TabIcon>
      <div className="mt-[15px]">
        <TabIcon><Ico w={30} h={28}><rect x="2" y="7" width="28" height="20" rx="2" /><path d="M6 13H20M6 18H20M6 23H20" strokeWidth="1.5" /><circle cx="25" cy="13" r="2" fill="#e6e6e6" /><circle cx="25" cy="21" r="2" fill="#e6e6e6" /><path d="M7 7L9 2M13 7L15 2" /></Ico></TabIcon>
        <TabIcon><Ico w={30} h={30}><rect x="1" y="2" width="30" height="12" rx="2" fill="#d0d0d0" stroke="none" /><rect x="7" y="10" width="18" height="20" fill="#d0d0d0" stroke="none" /><path d="M10 26l5-8 3 4 2-2 3 6Z" fill="#333" stroke="none" /></Ico></TabIcon>
        <TabIcon><Ico w={30} h={30}><rect x="10" y="2" width="20" height="20" /><path d="M13 19l6-8 4 5 2-2 3 5Z" fill="#e6e6e6" stroke="none" /><path d="M6 6V26H26M2 10V30H22" strokeWidth="1.5" /></Ico></TabIcon>
        <TabIcon><Ico w={30} h={30}><path d="M8 4l8 20H1Z" fill="#c8c8c8" stroke="none" /><circle cx="26" cy="6" r="4" fill="#d0d0d0" stroke="none" /><circle cx="22" cy="21" r="8" /></Ico></TabIcon>
        <TabIcon><Ico w={30} h={30}><circle cx="16" cy="16" r="12" fill="#a24555" stroke="none" /><path d="M8 12c4-4 8-2 10 0s-4 4-4 8-6-4-6-8ZM20 18c3 0 4 2 2 5-3 1-4-2-2-5Z" fill="#d8d8d8" stroke="none" /><path d="M1 6L6 9M31 26L26 23" stroke="#c06070" /></Ico></TabIcon>
      </div>
      <div className="mt-[18px]">
        <TabIcon><Ico w={30} h={28}><path d="M3 2H29V9H3ZM4 9V27H28V9" /><rect x="12" y="14" width="8" height="4" fill="#e6e6e6" stroke="none" /></Ico></TabIcon>
      </div>
      <div className="mt-[15px]">
        <TabIcon><Ico w={30} h={30}><path d="M2 8V2H8M24 2H30V8M2 24V30H8M24 30H30V24" strokeWidth="1.5" stroke="#aaaaaa" /><rect x="6" y="6" width="20" height="20" fill="#d98a4a" stroke="none" /></Ico></TabIcon>
        <TabIcon active><Ico w={32} h={32}><path d="M25 2a8 8 0 0 0-8 11L4 25a3.5 3.5 0 0 0 5 5l12-12a8 8 0 0 0 9-9l-5 5-5-2-1-5 5-5Z" fill="#6a9ae6" stroke="none" /></Ico></TabIcon>
        <TabIcon><Ico w={30} h={30}><circle cx="7" cy="7" r="5" fill="#7f8fd8" stroke="none" /><circle cx="7" cy="26" r="3.5" fill="#7f8fd8" stroke="none" /><circle cx="25" cy="25" r="4" fill="#7f8fd8" stroke="none" /><circle cx="26" cy="7" r="3" fill="#7f8fd8" stroke="none" /><path d="M7 7L25 25M7 7V26M7 7H26" stroke="#a8a8a8" /></Ico></TabIcon>
        <TabIcon><Ico w={30} h={30}><circle cx="14" cy="16" r="7" fill="#7f8fd8" stroke="none" /><path d="M3 12A12 12 0 0 0 26 26" stroke="#9a9ab8" /><circle cx="26" cy="6" r="4" fill="#e6e6e6" stroke="none" /></Ico></TabIcon>
        <TabIcon><Ico w={30} h={30}><path d="M4 16C4 10 16 2 24 2c6 0 6 5 4 10-4 10-10 16-18 16-4 0-6-6-6-12Z" stroke="#7f8fd8" strokeWidth="2.5" /><circle cx="13" cy="16" r="6" stroke="#7f8fd8" strokeWidth="3" /><circle cx="24" cy="7" r="2" fill="#e6e6e6" stroke="none" /></Ico></TabIcon>
        <TabIcon><Ico w={30} h={32}><path d="M5 5H27L18 27H14Z" stroke="#50c8a0" /><rect x="1" y="1" width="7" height="7" stroke="#50c8a0" /><rect x="24" y="1" width="7" height="7" stroke="#50c8a0" /><rect x="12" y="25" width="8" height="6" stroke="#50c8a0" /></Ico></TabIcon>
        <TabIcon><Ico w={30} h={30}><circle cx="16" cy="16" r="14" fill="#c05565" stroke="none" /><path d="M16 2A14 14 0 0 1 30 16L16 16Z" fill="#1d1d1d" stroke="none" /><path d="M2 18C8 20 24 20 30 16A14 14 0 0 1 2 18Z" fill="#d8d8d8" opacity="0.4" stroke="none" /></Ico></TabIcon>
      </div>
      <div className="mt-[15px]">
        <TabIcon>
          <svg width="28" height="28" viewBox="0 0 28 28" className="shrink-0">
            <rect width="28" height="28" fill="#bf5a6a" />
            {[[0,0],[14,0],[7,7],[21,7],[0,14],[14,14],[7,21],[21,21]].map(([x, y]) => <rect key={`${x}-${y}`} x={x} y={y} width="7" height="7" fill="#1d1d1d" />)}
          </svg>
        </TabIcon>
      </div>
    </div>
  );
}

function Panels() {
  return (
    <div className="ml-[19px] flex-1 min-w-0 mt-[4px] overflow-hidden">
      <div className="w-[505px] bg-[#3d3d3d] rounded-[8px] h-[420px]">
        <ModHeader name="Decimate" nameW="w-[188px]" icon={<Ico w={30} h={28}><rect x="2" y="2" width="26" height="24" strokeWidth="1.6" /><path d="M2 26L28 2M14 2V13H2" strokeWidth="1.6" /></Ico>} />
        <div className="mt-[10px] h-[50px] flex items-center pl-[16px]">
          <div className="flex h-[36px] w-[472px] rounded-[7px] overflow-hidden text-[22px] gap-[2px]">
            <div className="flex-1 bg-[#4772b3] text-[#f0f0f0] flex items-center justify-center">Collapse</div>
            <div className="flex-1 bg-[#545454] text-[#e6e6e6] flex items-center justify-center">Un-Subdivide</div>
            <div className="flex-1 bg-[#545454] text-[#e6e6e6] flex items-center justify-center">Planar</div>
          </div>
        </div>
        <Row label="Ratio"><Num v="1.0000" blue /></Row>
        <Row label="Symmetry" dotDim>
          <div className="flex items-center">
            <Check dim />
            <div className="ml-[18px] flex flex-1 h-[36px] rounded-[7px] overflow-hidden gap-[2px] text-[22px] text-[#8a8a8a]">
              <div className="flex-1 bg-[#40597f] flex items-center justify-center text-[#a8b8d0]">X</div>
              <div className="flex-1 bg-[#474747] flex items-center justify-center">Y</div>
              <div className="flex-1 bg-[#474747] flex items-center justify-center">Z</div>
            </div>
          </div>
        </Row>
        <Row label=""><Check label="Triangulate" /></Row>
        <Row label="Vertex Group" noDot><VGroupField /></Row>
        <Row label="Factor" dim dotDim>
          <div className="relative h-[36px] rounded-[7px] overflow-hidden bg-[#474747] flex items-center justify-center text-[22px] text-[#8a8a8a]">
            <div className="absolute left-0 top-0 h-full w-[20px] bg-[#40597f]" /><span className="relative">1.0000</span>
          </div>
        </Row>
        <div className="h-[50px] flex items-center pl-[16px] text-[22px] text-[#e2e2e2]">Face Count: 240</div>
      </div>

      <div className="w-[505px] bg-[#3d3d3d] rounded-[8px] mt-[7px] pb-[10px]">
        <ModHeader name="Wireframe" nameW="w-[147px]" icon={<Ico w={30} h={28}><path d="M2 9H22V26H2ZM2 9L9 2H28V19L22 26M22 9L28 2" strokeWidth="1.6" /><path d="M9 16h1M13 20h1" /></Ico>} extra={<GreyBtn><Cage /></GreyBtn>} />
        <div className="mt-[9px]">
          <Row label="Thickness"><Num v="0.088 m" /></Row>
          <Row label="Offset"><Num v="1.0000" blue /></Row>
          <Row label=""><Check label="Boundary" /></Row>
          <Row label="" cls="h-[30px] mb-[10px]"><Check on label="Replace Original" /></Row>
          <Row label="Thickness"><Check on label="Even" /></Row>
          <Row label="" cls="h-[30px] mb-[10px]"><Check label="Relative" /></Row>
          <Row label="Crease Edges" cls="h-[50px]">
            <div className="flex items-center">
              <Check dim />
              <Num v="1.0" cls="ml-[16px] flex-1 !bg-[#40597f] !text-[#8fa2c0]" />
            </div>
          </Row>
          <Row label="Material Offset"><Num v="0" /></Row>
        </div>
        <div className="mt-[12px] h-[47px] flex items-center pl-[44px] border-b border-[#363636]">
          <Chev size={17} /><span className="ml-[10px] text-[22px] text-[#e2e2e2]">Vertex Group</span>
        </div>
        <div className="mt-[13px]">
          <Row label="Vertex Group" noDot><VGroupField /></Row>
          <Row label="Factor" dim dotDim><Num v="0.000" dim /></Row>
        </div>
      </div>

      <div className="w-[505px] bg-[#3d3d3d] rounded-t-[8px] mt-[6px] border-2 border-b-0 border-[#4a6aa8] h-[300px]">
        <ModHeader name="Cast" nameW="w-[107px]" icon={<Ico w={30} h={28}><path d="M2 26V14A12 12 0 0 1 14 2h4a10 12 0 0 1 10 12 10 12 0 0 1-10 12Z" strokeWidth="1.6" /><path d="M2 14H14V26" strokeWidth="1.6" /></Ico>} extra={<><GreyBtn><TriMesh /></GreyBtn><GreyBtn><Cage /></GreyBtn></>} />
        <div className="mt-[10px]">
          <Row label="Shape">
            <div className="h-[36px] bg-[#282828] rounded-[7px] flex items-center justify-between pl-[14px] pr-[6px] text-[22px] text-[#e6e6e6]">Sphere<Chev size={12} /></div>
          </Row>
          <Row label="Axis" noDot>
            <div className="flex h-[36px] rounded-[7px] overflow-hidden gap-[1px] text-[22px] text-[#e6e6e6]">
              <div className="flex-1 bg-[#4772b3] flex items-center justify-center">X</div>
              <div className="flex-1 bg-[#545454] flex items-center justify-center">Y</div>
              <div className="flex-1 bg-[#545454] flex items-center justify-center">Z</div>
            </div>
          </Row>
          <Row label="Factor">
            <div className="relative h-[36px] rounded-[7px] overflow-hidden bg-[#545454] flex items-center justify-center text-[22px] text-[#e6e6e6]">
              <div className="absolute left-0 top-0 h-full w-[130px] bg-[#4772b3]" /><span className="relative">0.66</span>
            </div>
          </Row>
          <Row label="Radius"><Num v="0 m" /></Row>
        </div>
      </div>
    </div>
  );
}

function Properties() {
  return (
    <div className="mt-[9px] h-[1359px] rounded-t-[10px] overflow-hidden bg-[#303030] flex flex-col">
      <div className="h-[48px] mt-[4px] flex items-center pl-[19px] pr-[21px] shrink-0">
        <DarkBtn className="w-[57px] h-[34px]">
          <Ico w={30} h={28}><rect x="2" y="2" width="26" height="11" rx="5" fill="#e6e6e6" stroke="none" /><circle cx="22" cy="7" r="3.5" fill="#282828" stroke="none" /><rect x="2" y="16" width="26" height="11" rx="5" fill="#e6e6e6" stroke="none" /><circle cx="22" cy="21" r="3.5" fill="#282828" stroke="none" /></Ico><Chev size={11} />
        </DarkBtn>
        <div className="ml-[106px] w-[224px] h-[34px] bg-[#1d1d1d] rounded-[7px] flex items-center pl-[8px] gap-[14px]">
          <GlassIcon /><span className="text-[22px] text-[#5e5e5e]">Search</span>
        </div>
        <DarkBtn className="w-[33px] h-[34px] ml-auto"><Chev size={12} /></DarkBtn>
      </div>
      <div className="flex flex-1 min-h-0">
        <PropTabs />
        <Panels />
      </div>
    </div>
  );
}

// ---------- top of the window ----------
const TABS = [
  ['Modeling', 'ml-[22px]'], ['Sculpting', 'ml-[33px]'], ['UV Editing', 'ml-[33px]'], ['Texture Paint', 'ml-[33px]'], ['Shading', 'ml-[34px]'],
  ['Animation', 'ml-[33px]'], ['Rendering', 'ml-[34px]'], ['Compositing', 'ml-[33px]'], ['Geometry Nodes', 'ml-[33px]'], ['Scripting', 'ml-[33px]'],
];

function BlenderLogo() {
  return (
    <svg width="34" height="40" viewBox="0 0 34 40" fill="none" className="shrink-0">
      <circle cx="21" cy="24" r="10" stroke="#e6e6e6" strokeWidth="4.5" />
      <circle cx="21" cy="24" r="3.5" fill="#e6e6e6" />
      <path d="M20 3L31 14M2 20H16M7 30L17 18" stroke="#e6e6e6" strokeWidth="4" />
    </svg>
  );
}

function TopBar() {
  return (
    <div className="h-[51px] flex bg-[#181818]">
      <div className="flex items-center pl-[17px] w-[516px] shrink-0">
        <BlenderLogo />
        <Menu className="ml-[20px]">File</Menu>
        <Menu className="ml-[33px]">Edit</Menu>
        <Menu className="ml-[31px]">Render</Menu>
        <Menu className="ml-[31px]">Window</Menu>
        <Menu className="ml-[30px]">Help</Menu>
      </div>
      <div className="flex items-end h-[45px] w-[1654px] bg-[#121212] shrink-0 text-[22px] text-[#a8a8a8]">
        <div className="w-[104px] h-[37px] bg-[#2b2b2b] rounded-t-[6px] flex items-center justify-center text-[#ffffff]">Layout</div>
        {TABS.map(([t, m]) => <div key={t} className={`h-[37px] flex items-center ${m}`}>{t}</div>)}
        <div className="ml-[28px] h-[37px] flex items-center text-[30px] font-light">+</div>
      </div>
      <div className="flex items-center flex-1 pl-[613px]">
        <div className="flex h-[40px] w-[339px] rounded-[7px] overflow-hidden bg-[#232323] shrink-0">
          <div className="w-[62px] flex items-center justify-center gap-[4px] bg-[#282828]">
            <Ico w={30} h={32}><path d="M9 6l7 14a7 7 0 1 1-14 0Z" fill="#e6e6e6" stroke="none" /><circle cx="22" cy="7" r="4" fill="#e6e6e6" stroke="none" /><circle cx="20" cy="24" r="7" /></Ico><Chev size={11} />
          </div>
          <div className="w-[196px] bg-[#1d1d1d] flex items-center justify-between pl-[14px] pr-[4px] text-[22px] text-[#e6e6e6]">Scene
            <Ico w={30} h={30}><path d="M20 2l10 10-7 2-6 6-3 6-8-8 6-3 6-6ZM10 20L2 30" stroke="#8e8e8e" /></Ico>
          </div>
          <div className="w-[39px] bg-[#545454] flex items-center justify-center"><Ico w={26} h={32} vb="0 0 26 32"><path d="M2 8H6M2 8V30H18V26M8 2H18L24 8V26H8Z" /></Ico></div>
          <div className="flex-1 flex items-center justify-center"><svg width="16" height="22" viewBox="0 0 16 22" fill="none" stroke="#6e6e6e" strokeWidth="2"><path d="M2 2l12 18M14 2L2 20" /></svg></div>
        </div>
        <div className="ml-[15px] flex h-[40px] w-[302px] rounded-[7px] overflow-hidden bg-[#232323] shrink-0">
          <div className="w-[60px] flex items-center justify-center gap-[4px] bg-[#282828]">
            <Ico w={30} h={32}><rect x="10" y="2" width="18" height="22" fill="#e6e6e6" stroke="none" /><path d="M13 18l5-7 3 4 2-2 3 5Z" fill="#333" stroke="none" /><path d="M6 6V26H24M2 10V30H20" strokeWidth="1.5" /></Ico><Chev size={11} />
          </div>
          <div className="w-[161px] bg-[#1d1d1d] flex items-center pl-[14px] text-[22px] text-[#e6e6e6]">ViewLayer</div>
          <div className="w-[41px] bg-[#545454] flex items-center justify-center"><Ico w={26} h={32} vb="0 0 26 32"><path d="M2 8H6M2 8V30H18V26M8 2H18L24 8V26H8Z" /></Ico></div>
          <div className="flex-1 flex items-center justify-center"><svg width="16" height="22" viewBox="0 0 16 22" fill="none" stroke="#6e6e6e" strokeWidth="2"><path d="M2 2l12 18M14 2L2 20" /></svg></div>
        </div>
      </div>
    </div>
  );
}

function StatusBar() {
  const item = 'text-[22px] text-[#a8a8a8]';
  return (
    <div className="h-[37px] bg-[#181818] flex items-center pl-[24px] pr-[25px]">
      <Mouse part="left" /><span className={`ml-[15px] w-[383px] ${item}`}>Select (Toggle)</span>
      <Mouse part="mid" /><span className={`ml-[14px] w-[382px] ${item}`}>Dolly View</span>
      <Mouse part="right" /><span className={`ml-[14px] ${item}`}>Lasso Select</span>
      <div className="ml-auto flex items-center">
        <Ico w={30} h={30}><circle cx="16" cy="16" r="13" stroke="#9a9a9a" /><ellipse cx="16" cy="16" rx="6" ry="13" stroke="#9a9a9a" /><path d="M3 12H29M3 20H29" stroke="#9a9a9a" /><path d="M3 3L29 29" stroke="#cfcfcf" strokeWidth="3" /></Ico>
        <span className="ml-[21px] w-[2px] h-[26px] bg-[#a8a8a8]" />
        <span className={`ml-[7px] ${item}`}>4.2.1</span>
      </div>
    </div>
  );
}

export default function App() {
  return (
    <div className="w-[3456px] h-[2180px] overflow-hidden flex flex-col bg-[#181818] font-['Inter','Liberation_Sans',sans-serif]">
      <div className="relative h-[24px] bg-[#e9e8dc] shrink-0">
        <div className="absolute left-[2415px] top-0 w-[28px] h-[3px] rounded-b-[4px] bg-[#222]" />
        <div className="absolute left-[2488px] top-0 w-[20px] h-[3px] bg-[#666]" />
        <div className="absolute left-[2556px] top-0 w-[14px] h-[3px] bg-[#333]" />
        <div className="absolute left-[2628px] top-0 w-[22px] h-[3px] bg-[#d8562a]" />
      </div>
      <div className="relative h-[61px] shrink-0 bg-[#222222] pt-[3px] pb-[3px]">
        <div className="h-full rounded-t-[14px] bg-[#f4f4f3] border-t-2 border-[#ffffff] flex items-center justify-center">
          <svg width="22" height="26" viewBox="0 0 22 26" className="shrink-0"><rect x="1" y="1" width="20" height="24" rx="2" fill="#f8f8f8" stroke="#e4e4e4" /><circle cx="11" cy="13" r="5" fill="none" stroke="#e0a070" strokeWidth="2" /></svg>
          <span className="ml-[13px] text-[26px] font-semibold text-[#3a3a3a]">* ball - Blender 4.2.1 LTS</span>
        </div>
        <div className="absolute left-[16px] top-[17px] flex gap-[16px]">
          <div className="w-[24px] h-[24px] rounded-full bg-[#ec6a5e] flex items-center justify-center"><div className="w-[8px] h-[8px] rounded-full bg-[#7d1810]" /></div>
          <div className="w-[24px] h-[24px] rounded-full bg-[#f4bf4f]" />
          <div className="w-[24px] h-[24px] rounded-full bg-[#61c554]" />
        </div>
      </div>
      <TopBar />
      <div className="h-[2px] shrink-0" />
      <div className="flex flex-1 min-h-0">
        <div className="w-[2856px] shrink-0">
          <Viewport />
          <Timeline />
        </div>
        <div className="ml-[4px] flex-1 min-w-0">
          <Outliner />
          <Properties />
        </div>
      </div>
      <StatusBar />
    </div>
  );
}
